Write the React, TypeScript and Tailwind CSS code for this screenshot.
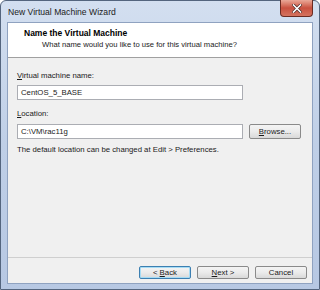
import React from "react";

function WinButton({
  children,
  focused = false,
}: {
  children: React.ReactNode;
  focused?: boolean;
}) {
  return (
    <div
      className={
        "w-[52px] h-[13px] rounded-[2px] border flex items-center justify-center text-[7.8px] leading-none text-[#1a1a1a] bg-gradient-to-b from-[#f4f4f4] via-[#ebebeb] to-[#d9d9d9] " +
        (focused
          ? "border-[#3c7fb1] shadow-[inset_0_0_0_1px_#a6dcf5]"
          : "border-[#8a8a8a]")
      }
    >
      {children}
    </div>
  );
}

export default function App() {
  return (
    <div
      className="w-[320px] h-[290px] overflow-hidden bg-white"
      style={{ fontFamily: '"Liberation Sans", Arial, sans-serif' }}
    >
      <div className="w-full h-full flex flex-col border border-[#54657e] rounded-t-[6px] bg-gradient-to-b from-[#d3dff0] via-[#bfcfe7] to-[#b7c8e3] px-[6px] pb-[5px]">
        {/* title bar */}
        <div className="h-[21px] flex justify-between items-start">
          <div className="pl-[1px] pt-[5px] text-[8.6px] leading-[12px] text-[#1b1b1b]">
            New Virtual Machine Wizard
          </div>
          <div className="-mt-[1px] w-[33px] h-[17px] rounded-b-[4px] border border-t-0 border-[#6b2b22] bg-gradient-to-b from-[#e9a898] via-[#c9503f] to-[#d4735f] flex items-center justify-center">
            <svg width="10" height="9" viewBox="0 0 10 9">
              <path
                d="M1.5 1 L8.5 8 M8.5 1 L1.5 8"
                stroke="#4a2a26"
                strokeWidth="3"
                strokeLinecap="square"
              />
              <path
                d="M1.5 1 L8.5 8 M8.5 1 L1.5 8"
                stroke="#ffffff"
                strokeWidth="1.6"
                strokeLinecap="square"
              />
            </svg>
          </div>
        </div>

        {/* client area */}
        <div className="flex-1 flex flex-col border border-[#8fa2c0] bg-[#f0f0f0]">
          {/* header */}
          <div className="h-[35px] bg-white border-b border-[#a0a0a0] pl-[16px] pt-[5px]">
            <div className="text-[8.5px] leading-[11px] font-bold text-[#000]">
              Name the Virtual Machine
            </div>
            <div className="ml-[18px] text-[7.65px] leading-[11px] text-[#1a1a1a]">
              What name would you like to use for this virtual machine?
            </div>
          </div>

          {/* body */}
          <div className="flex-1 flex flex-col pl-[9px] pt-[13px] text-[7.75px] text-[#1a1a1a]">
            <div className="leading-[10px]">
              <span className="underline">V</span>irtual machine name:
            </div>
            <div className="mt-[4px] w-[226px] h-[15px] bg-white border border-[#abadb3] flex items-center pl-[3px] leading-none">
              CentOS_5_BASE
            </div>
            <div className="mt-[9px] leading-[10px]">
              <span className="underline">L</span>ocation:
            </div>
            <div className="mt-[5px] flex gap-[6px] items-start">
              <div className="w-[226px] h-[15px] bg-white border border-[#abadb3] flex items-center pl-[3px] leading-none">
                C:\VM\rac11g
              </div>
              <div className="w-[52px] h-[15px] rounded-[2px] border border-[#8a8a8a] bg-gradient-to-b from-[#f4f4f4] via-[#ebebeb] to-[#d9d9d9] flex items-center justify-center leading-none">
                <span className="underline">B</span>rowse...
              </div>
            </div>
            <div className="mt-[6px] leading-[10px]">
              The default location can be changed at Edit &gt; Preferences.
            </div>
          </div>

          {/* footer */}
          <div className="h-[26px] border-t border-[#cfcfcf] pt-[8px] pr-[5px] flex justify-end items-start gap-[6px]">
            <WinButton focused>
              &lt; <span className="underline ml-[2px]">B</span>ack
            </WinButton>
            <WinButton>
              <span className="underline">N</span>ext &gt;
            </WinButton>
            <WinButton>Cancel</WinButton>
          </div>
        </div>
      </div>
    </div>
  );
}
